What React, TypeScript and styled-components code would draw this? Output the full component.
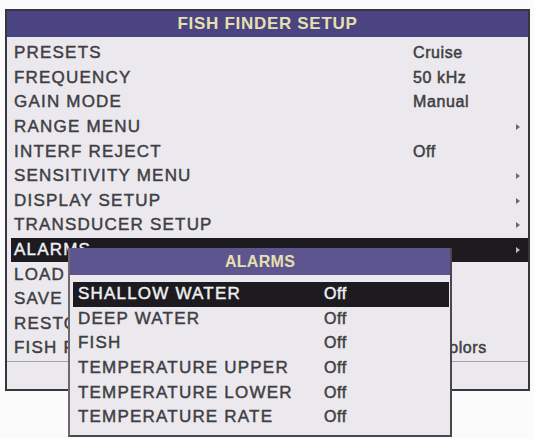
import React from 'react';
import styled, {createGlobalStyle} from 'styled-components';

const GlobalStyle = createGlobalStyle`
    html, body {
        margin: 0;
        padding: 0;
        background: #fbfbfc;
        font-family: "Liberation Sans", Arial, sans-serif;
    }
`

const Page = styled.div`
    position: relative;
    width: 534px;
    height: 439px;
    padding: 9px 0 0 5px;
    box-sizing: border-box;
`

const Panel = styled.div`
    width: 525px;
    box-sizing: border-box;
    border: 2px solid #38363c;
    background: #ebe9ee;
`

const TitleBar = styled.div<{ $tone?: 'main' | 'sub' }>`
    height: ${({$tone}) => $tone === 'sub' ? '27px' : '26px'};
    display: flex;
    align-items: center;
    justify-content: center;
    background: ${({$tone}) => $tone === 'sub' ? '#5d5590' : '#4a4482'};
    color: #e6e0ae;
    font-size: ${({$tone}) => $tone === 'sub' ? '16px' : '17px'};
    font-weight: bold;
    letter-spacing: ${({$tone}) => $tone === 'sub' ? '0.3px' : '0.7px'};
`

const List = styled.div`
    padding-top: 4px;
`

const Row = styled.div<{ $active?: boolean }>`
    display: grid;
    grid-template-columns: 399px 1fr 12px;
    align-items: center;
    height: 24.6px;
    margin-left: 4px;
    padding-left: 3px;
    background: ${({$active}) => $active ? '#1d1b20' : 'transparent'};
    color: ${({$active}) => $active ? '#f0f0f2' : '#3f3e43'};
`

const Label = styled.span`
    font-size: 17px;
    letter-spacing: 1.2px;
    -webkit-text-stroke: 0.45px currentColor;
    white-space: nowrap;
`

const Value = styled.span`
    font-size: 16px;
    letter-spacing: 0.6px;
    -webkit-text-stroke: 0.5px currentColor;
    white-space: nowrap;
`

const Marker = styled.span`
    width: 0;
    height: 0;
    border-left: 4px solid currentColor;
    border-top: 3px solid transparent;
    border-bottom: 3px solid transparent;
    opacity: 0.75;
`

const Footer = styled.div`
    height: 27px;
    border-top: 1px solid #a6a4ab;
`

const Popup = styled.div`
    position: absolute;
    left: 68px;
    top: 248px;
    width: 384px;
    box-sizing: border-box;
    background: #ebe9ee;
    border: 2px solid #4a484e;
    border-top: none;
    border-left-color: #6c6a70;
`

const PopupList = styled.div`
    padding: 7px 0 5px;
`

const PopupRow = styled.div<{ $active?: boolean }>`
    display: grid;
    grid-template-columns: 246px 1fr;
    align-items: center;
    height: 24.6px;
    margin: 0 1px 0 3px;
    padding-left: 5px;
    background: ${({$active}) => $active ? '#1d1b20' : 'transparent'};
    color: ${({$active}) => $active ? '#f0f0f2' : '#3f3e43'};
`

type Item = { label: string; value?: string; sub?: boolean; active?: boolean };

const setupItems: Item[] = [
    {label: 'PRESETS', value: 'Cruise'},
    {label: 'FREQUENCY', value: '50 kHz'},
    {label: 'GAIN MODE', value: 'Manual'},
    {label: 'RANGE MENU', sub: true},
    {label: 'INTERF REJECT', value: 'Off'},
    {label: 'SENSITIVITY MENU', sub: true},
    {label: 'DISPLAY SETUP', sub: true},
    {label: 'TRANSDUCER SETUP', sub: true},
    {label: 'ALARMS', sub: true, active: true},
    {label: 'LOAD SETTINGS'},
    {label: 'SAVE SETTINGS'},
    {label: 'RESTORE DEFAULTS'},
    {label: 'FISH FINDER COLORS', value: '16 Colors'},
];

const alarmItems: Item[] = [
    {label: 'SHALLOW WATER', value: 'Off', active: true},
    {label: 'DEEP WATER', value: 'Off'},
    {label: 'FISH', value: 'Off'},
    {label: 'TEMPERATURE UPPER', value: 'Off'},
    {label: 'TEMPERATURE LOWER', value: 'Off'},
    {label: 'TEMPERATURE RATE', value: 'Off'},
];

function App() {
    return (
        <Page>
            <GlobalStyle/>
            <Panel>
                <TitleBar>FISH FINDER SETUP</TitleBar>
                <List>
                    {setupItems.map((item) =>
                        <Row key={item.label} $active={item.active}>
                            <Label>{item.label}</Label>
                            <Value>{item.value}</Value>
                            {item.sub ? <Marker/> : <span/>}
                        </Row>
                    )}
                </List>
                <Footer/>
            </Panel>
            <Popup>
                <TitleBar $tone="sub">ALARMS</TitleBar>
                <PopupList>
                    {alarmItems.map((item) =>
                        <PopupRow key={item.label} $active={item.active}>
                            <Label>{item.label}</Label>
                            <Value>{item.value}</Value>
                        </PopupRow>
                    )}
                </PopupList>
            </Popup>
        </Page>
    )
}

export default App;
